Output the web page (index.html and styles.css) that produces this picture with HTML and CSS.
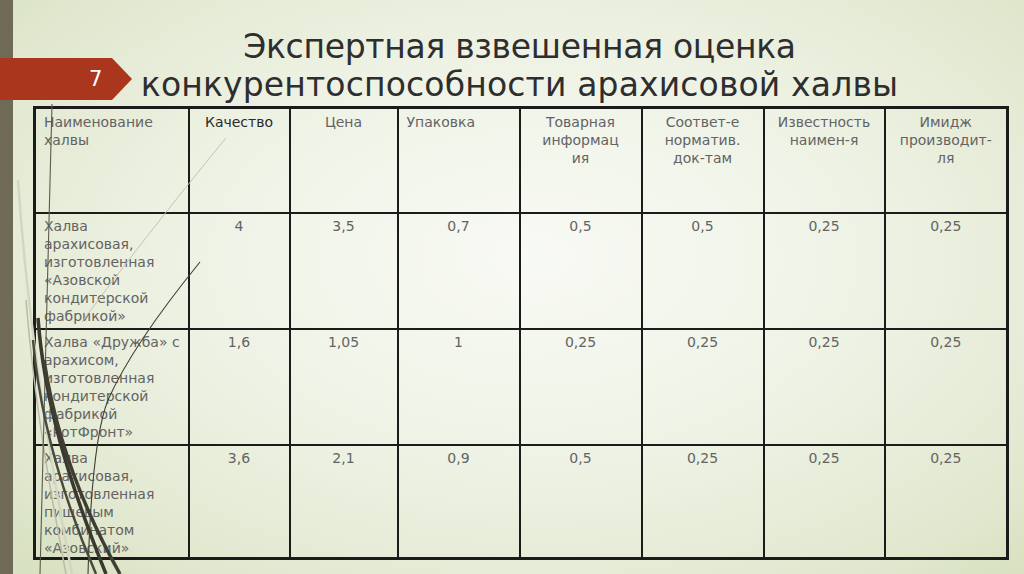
FILE: index.html
```html
<!DOCTYPE html>
<html lang="ru">
<head>
<meta charset="utf-8">
<title>Экспертная взвешенная оценка</title>
<link rel="stylesheet" href="styles.css">
</head>
<body>
<div class="slide">
  <div class="strip"></div>
  <div class="badge"><span>7</span></div>
  <div class="content">
    <h1 class="title">Экспертная взвешенная оценка<br><span class="l2">конкурентоспособности арахисовой халвы</span></h1>
    <table class="grid">
      <colgroup>
        <col class="c-name"><col class="c-q"><col class="c-p"><col class="c-u"><col class="c-t"><col class="c-s"><col class="c-i"><col class="c-m">
      </colgroup>
      <thead>
        <tr class="head">
          <th class="left">Наименование<br>халвы</th>
          <th class="dark">Качество</th>
          <th>Цена</th>
          <th class="left">Упаковка</th>
          <th>Товарная<br>информац<br>ия</th>
          <th>Соответ-е<br>норматив.<br>док-там</th>
          <th>Известность<br>наимен-я</th>
          <th>Имидж<br>производит-<br>ля</th>
        </tr>
      </thead>
      <tbody>
        <tr class="r1">
          <td class="left">Халва<br>арахисовая,<br>изготовленная<br>«Азовской<br>кондитерской<br>фабрикой»</td>
          <td>4</td><td>3,5</td><td>0,7</td><td>0,5</td><td>0,5</td><td>0,25</td><td>0,25</td>
        </tr>
        <tr class="r2">
          <td class="left">Халва «Дружба» с<br>арахисом,<br>изготовленная<br>кондитерской<br>фабрикой<br>«РотФронт»</td>
          <td>1,6</td><td>1,05</td><td>1</td><td>0,25</td><td>0,25</td><td>0,25</td><td>0,25</td>
        </tr>
        <tr class="r3">
          <td class="left">Халва<br>арахисовая,<br>изготовленная<br>пищевым<br>комбинатом<br>«Азовский»</td>
          <td>3,6</td><td>2,1</td><td>0,9</td><td>0,5</td><td>0,25</td><td>0,25</td><td>0,25</td>
        </tr>
      </tbody>
    </table>
  </div>
  <svg class="grass" width="260" height="574" viewBox="0 0 260 574" aria-hidden="true">
    <path d="M18,180 C26,300 44,430 72,574" fill="none" stroke="#d3d7c2" stroke-width="2.5"/>
    <path d="M26,300 C34,400 50,490 66,574" fill="none" stroke="#b8bba6" stroke-width="1.5"/>
    <path d="M226,138 C185,188 135,250 82,322" fill="none" stroke="#c2c5b1" stroke-width="1"/>
    <path d="M52,104 C49,250 44,400 40,574" fill="none" stroke="#5b5a4c" stroke-width="1.1"/>
    <path d="M200,262 C165,305 128,355 108,400 C96,430 90,500 88,574" fill="none" stroke="#3f3f35" stroke-width="1.1"/>
    <path d="M38,318 C44,400 68,480 106,574" fill="none" stroke="#3a392e" stroke-width="3.5"/>
    <path d="M33,340 C40,420 64,500 96,574" fill="none" stroke="#4a493d" stroke-width="2.5"/>
    <path d="M44,360 C56,440 84,510 120,574" fill="none" stroke="#3f3e33" stroke-width="3.5"/>
  </svg>
</div>
</body>
</html>
```
FILE: styles.css
```css
html, body {
  margin: 0;
  padding: 0;
}
body {
  width: 1024px;
  height: 574px;
  overflow: hidden;
  font-family: "DejaVu Sans", "Liberation Sans", sans-serif;
}
.slide {
  position: relative;
  width: 1024px;
  height: 574px;
  overflow: hidden;
  background: radial-gradient(ellipse 70% 75% at 52% 45%, #f8faf4 0%, #eff3e6 45%, #e1e8cf 85%, #d8e1c1 100%);
}
.strip {
  position: absolute;
  left: 0;
  top: 0;
  width: 13px;
  height: 574px;
  background: #6f6a55;
}
.badge {
  position: absolute;
  left: 0;
  top: 58px;
  width: 132px;
  height: 42px;
  background: #a9361d;
  clip-path: polygon(0 0, 112px 0, 132px 50%, 112px 100%, 0 100%);
  z-index: 2;
}
.badge span {
  position: absolute;
  left: 89px;
  top: 9px;
  color: #ffffff;
  font-size: 21px;
  line-height: 24px;
}
.content {
  margin-left: 33px;
  width: 973px;
  padding-top: 28px;
  display: flex;
  flex-direction: column;
}
.title {
  margin: 0;
  text-align: center;
  font-weight: normal;
  font-size: 33px;
  line-height: 38px;
  color: #2e2e2e;
  letter-spacing: -0.3px;
  height: 78px;
}
.title .l2 {
  letter-spacing: 0.15px;
}
.grid {
  border-collapse: collapse;
  table-layout: fixed;
  width: 973px;
  border: 3px solid #1b1b1b;
  font-size: 14px;
  line-height: 18px;
  color: #636363;
}
.c-name { width: 154px; }
.c-q { width: 101px; }
.c-p { width: 108px; }
.c-u { width: 122px; }
.c-t { width: 122px; }
.c-s { width: 122px; }
.c-i { width: 121px; }
.c-m { width: 123px; }
.grid th, .grid td {
  border: 2px solid #1b1b1b;
  vertical-align: top;
  text-align: center;
  font-weight: normal;
  padding: 4px 4px 0 4px;
  white-space: nowrap;
}
.grid .left {
  text-align: left;
  padding-left: 8px;
}
.grid .dark {
  color: #2a2a2a;
}
.head { height: 105px; }
.r1 { height: 116px; }
.r2 { height: 116px; }
.r3 { height: 113px; }
.grid tbody td { padding-top: 3px; }
.grass {
  position: absolute;
  left: 0;
  top: 0;
  pointer-events: none;
  z-index: 1;
}
```
